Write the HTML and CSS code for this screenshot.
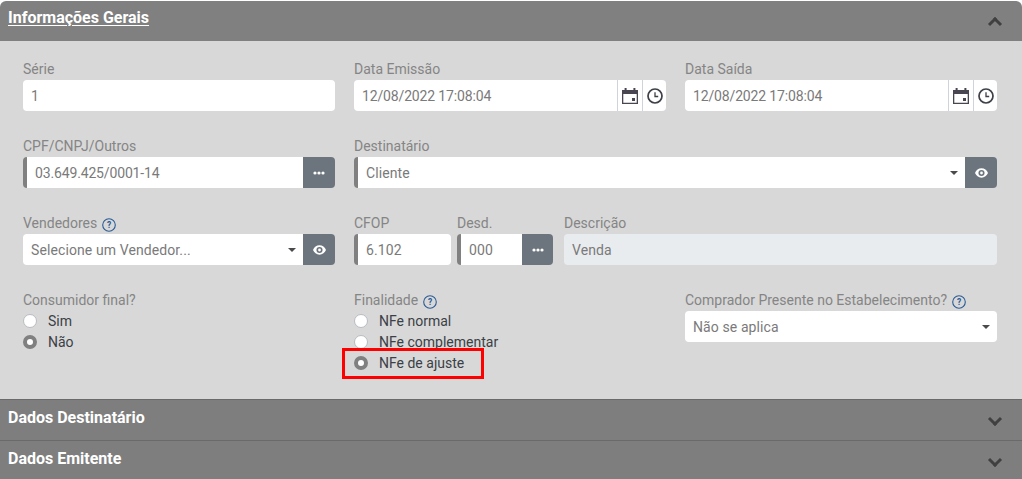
FILE: index.html
```html
<!DOCTYPE html>
<html lang="pt-BR">
<head>
<meta charset="utf-8">
<title>Informações Gerais</title>
<link rel="stylesheet" href="styles.css">
</head>
<body>
<svg class="defs" width="0" height="0" aria-hidden="true">
  <defs>
    <symbol id="cal" viewBox="0 0 16 16">
      <path fill="#4a4651" d="M0 2h2.600V0h2v2h6.800V0h2v2H16v4H0z"/>
      <path fill="none" stroke="#4a4651" stroke-width="1.300" d="M.65 5v10.350h14.700V5"/>
      <rect x="10" y="10" width="3" height="3" fill="#4a4651"/>
    </symbol>
    <symbol id="clock" viewBox="0 0 16 16">
      <circle cx="8" cy="8" r="7" fill="none" stroke="#3d4048" stroke-width="1.700"/>
      <path fill="none" stroke="#3d4048" stroke-width="1.300" d="M8 4.200v4.300h3.200"/>
    </symbol>
    <symbol id="eye" viewBox="0 0 14 10">
      <path fill="#fff" fill-rule="evenodd" d="M7 0c3.200 0 5.800 2.200 7 5-1.200 2.800-3.800 5-7 5S1.200 7.800 0 5c1.200-2.800 3.800-5 7-5zm0 1.700a3.300 3.300 0 1 0 0 6.600 3.300 3.300 0 0 0 0-6.600z"/>
      <circle cx="7" cy="5" r="1.500" fill="#fff"/>
    </symbol>
    <symbol id="dots" viewBox="0 0 12 4">
      <circle cx="2" cy="2" r="1.600" fill="#fff"/>
      <circle cx="6" cy="2" r="1.600" fill="#fff"/>
      <circle cx="10" cy="2" r="1.600" fill="#fff"/>
    </symbol>
    <symbol id="help" viewBox="0 0 14 14">
      <circle cx="7" cy="7" r="6.300" fill="none" stroke="#2a5a96" stroke-width="1.100"/>
      <text x="7" y="10" text-anchor="middle" font-family="Roboto, sans-serif" font-size="8.500" font-weight="700" fill="#2a5a96">?</text>
    </symbol>
  </defs>
</svg>

<main class="accordion">
  <section class="panel panel-open">
    <header class="panel-head panel-head-first">
      <a class="panel-title panel-title-link" href="#">Informações Gerais</a>
      <span class="chevron chevron-up"></span>
    </header>
    <div class="panel-body">
      <div class="grid">
        <div class="field">
          <label class="label">Série</label>
          <div class="control"><span class="input">1</span></div>
        </div>
        <div class="field">
          <label class="label">Data Emissão</label>
          <div class="control">
            <span class="input input-date input-num">12/08/2022 17:08:04</span>
            <span class="addon"><svg class="icon-cal"><use href="#cal"/></svg></span>
            <span class="addon addon-last"><svg class="icon-clock"><use href="#clock"/></svg></span>
          </div>
        </div>
        <div class="field">
          <label class="label">Data Saída</label>
          <div class="control">
            <span class="input input-date input-num">12/08/2022 17:08:04</span>
            <span class="addon"><svg class="icon-cal"><use href="#cal"/></svg></span>
            <span class="addon addon-last"><svg class="icon-clock"><use href="#clock"/></svg></span>
          </div>
        </div>

        <div class="field">
          <label class="label">CPF/CNPJ/Outros</label>
          <div class="control">
            <span class="input input-req input-num">03.649.425/0001-14</span>
            <button class="btn" type="button"><svg class="icon-dots"><use href="#dots"/></svg></button>
          </div>
        </div>
        <div class="field span-2">
          <label class="label">Destinatário</label>
          <div class="control">
            <span class="input input-req input-select">Cliente<span class="caret"></span></span>
            <button class="btn" type="button"><svg class="icon-eye"><use href="#eye"/></svg></button>
          </div>
        </div>

        <div class="field">
          <label class="label">Vendedores <svg class="icon-help"><use href="#help"/></svg></label>
          <div class="control">
            <span class="input input-select">Selecione um Vendedor...<span class="caret"></span></span>
            <button class="btn" type="button"><svg class="icon-eye"><use href="#eye"/></svg></button>
          </div>
        </div>
        <div class="span-2 fiscal">
          <div class="field field-cfop">
            <label class="label">CFOP</label>
            <div class="control"><span class="input input-req">6.102</span></div>
          </div>
          <div class="field field-desd">
            <label class="label">Desd.</label>
            <div class="control">
              <span class="input input-req">000</span>
              <button class="btn" type="button"><svg class="icon-dots"><use href="#dots"/></svg></button>
            </div>
          </div>
          <div class="field field-desc">
            <label class="label">Descrição</label>
            <div class="control"><span class="input input-disabled">Venda</span></div>
          </div>
        </div>

        <div class="field">
          <label class="label">Consumidor final?</label>
          <div class="radio-row"><span class="radio"></span>Sim</div>
          <div class="radio-row"><span class="radio radio-on"></span>Não</div>
        </div>
        <div class="field">
          <label class="label">Finalidade <svg class="icon-help"><use href="#help"/></svg></label>
          <div class="radio-row"><span class="radio"></span>NFe normal</div>
          <div class="radio-row"><span class="radio"></span>NFe complementar</div>
          <div class="radio-row"><span class="radio radio-on"></span>NFe de ajuste</div>
          <span class="highlight"></span>
        </div>
        <div class="field">
          <label class="label">Comprador Presente no Estabelecimento? <svg class="icon-help"><use href="#help"/></svg></label>
          <div class="control">
            <span class="input input-select">Não se aplica<span class="caret"></span></span>
          </div>
        </div>
      </div>
    </div>
  </section>
  <section class="panel">
    <header class="panel-head">
      <span class="panel-title">Dados Destinatário</span>
      <span class="chevron chevron-down"></span>
    </header>
  </section>
  <section class="panel">
    <header class="panel-head">
      <span class="panel-title">Dados Emitente</span>
      <span class="chevron chevron-down"></span>
    </header>
  </section>
</main>
</body>
</html>
```
FILE: styles.css
```css
* { box-sizing: border-box; }
html, body { margin: 0; padding: 0; height: 100%; }
body {
  background: #fff;
  font-family: Roboto, "Liberation Sans", sans-serif;
  font-size: 14px;
  overflow: hidden;
}
.defs { position: absolute; }
.accordion { padding-top: 1px; }
.panel-head {
  height: 41px;
  display: flex;
  align-items: center;
  justify-content: space-between;
  padding: 0 19px 6px 8px;
  background: #7e7e7e;
  border-top: 1px solid #6a6a6a;
}
.panel-head-first {
  height: 40px;
  border-top: 0;
  background: #808080;
  border-radius: 6px 6px 0 0;
  padding-bottom: 7px;
}
.panel-title {
  color: #fff;
  font-size: 16px;
  font-weight: 700;
}
.panel-title-link { text-decoration: underline; text-underline-offset: 2px; }
.chevron {
  width: 10px;
  height: 10px;
  margin-right: 3px;
  border: solid #404040;
  border-width: 3px 0 0 3px;
}
.chevron-up { transform: rotate(45deg); margin-top: 13px; }
.chevron-down { transform: rotate(225deg); margin-top: 3px; }
.panel-body {
  background: #d8d8d8;
  height: 358px;
  padding: 18px 25px 0 23px;
}
.grid {
  display: grid;
  grid-template-columns: repeat(3, 312px);
  column-gap: 19px;
  grid-auto-rows: 51px;
  row-gap: 26px;
}
.span-2 { grid-column: span 2; }
.field { position: relative; min-width: 0; }
.label {
  display: flex;
  align-items: center;
  gap: 1px;
  height: 20px;
  color: #858585;
  font-size: 14px;
  white-space: pre;
}
.control { display: flex; height: 31px; margin-top: 1px; }
.input {
  flex: 1;
  min-width: 0;
  display: flex;
  align-items: center;
  height: 31px;
  padding: 0 8px;
  background: #fff;
  color: #7a7a7a;
  border-radius: 4px;
  font-size: 14px;
  letter-spacing: .1px;
}
.input-num { letter-spacing: -.15px; }
.input-date { border-radius: 4px 0 0 4px; }
.input-req { border-left: 4px solid #808080; }
.control .btn { border-radius: 0 4px 4px 0; }
.control .input:has(+ .btn) { border-top-right-radius: 0; border-bottom-right-radius: 0; }
.input-select { position: relative; }
.input-disabled { background: #e9ecef; }
.caret {
  position: absolute;
  right: 7px;
  top: 14px;
  border: 4px solid transparent;
  border-top-color: #4a4a4a;
  border-bottom: 0;
}
.addon {
  width: 25px;
  flex: none;
  display: flex;
  align-items: center;
  justify-content: center;
  background: #fff;
  border-left: 1px solid #ced4da;
}
.addon-last { width: 24px; border-radius: 0 4px 4px 0; }
.icon-cal { width: 16px; height: 16px; }
.icon-clock { width: 16px; height: 16px; }
.btn {
  width: 32px;
  flex: none;
  padding: 0;
  border: 0;
  display: flex;
  align-items: center;
  justify-content: center;
  background: #6c757d;
}
.icon-dots { width: 12px; height: 4px; }
.icon-eye { width: 13px; height: 10px; }
.icon-help { width: 14px; height: 14px; margin-top: 4px; }
.fiscal { display: flex; }
.field-cfop { width: 97px; margin-right: 6px; }
.field-desd { width: 96px; margin-right: 11px; }
.field-desc { flex: 1; }
.field-desd .btn { width: 31px; }
.radio-row {
  display: flex;
  align-items: center;
  height: 21px;
  color: #3b3f46;
  font-size: 14px;
}
.radio {
  width: 14px;
  height: 14px;
  flex: none;
  margin-right: 11px;
  border-radius: 50%;
  background: #fff;
  border: 1px solid #b8bcc2;
}
.radio-on { border: 4px solid #808080; }
.highlight {
  position: absolute;
  left: -12px;
  top: 58px;
  width: 142px;
  height: 31px;
  border: 3px solid #f00;
}
```
